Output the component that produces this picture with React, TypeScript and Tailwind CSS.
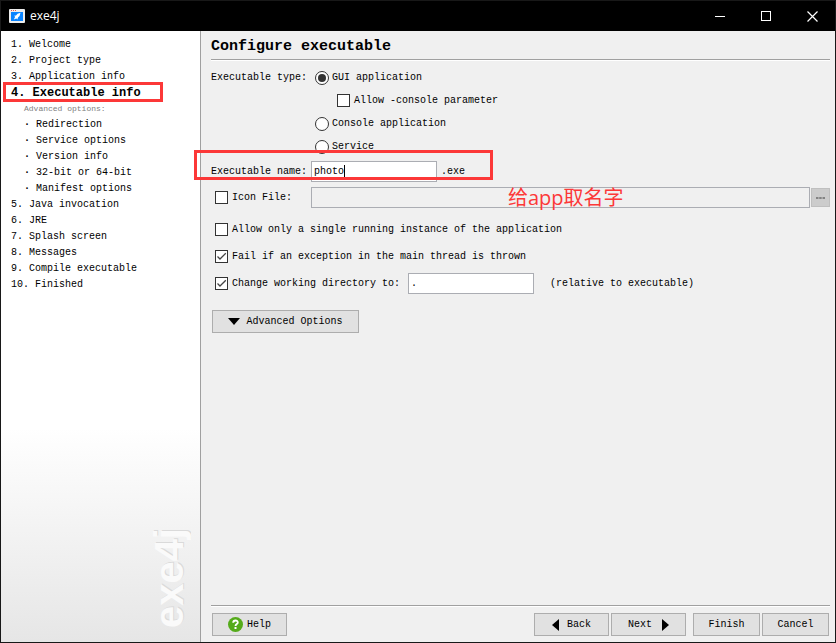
import React, { useState } from "react";

type Step = {
  label: string;
  active?: boolean;
  children?: string[];
};

const steps: Step[] = [
  { label: "Welcome" },
  { label: "Project type" },
  { label: "Application info" },
  {
    label: "Executable info",
    active: true,
    children: ["Redirection", "Service options", "Version info", "32-bit or 64-bit", "Manifest options"],
  },
  { label: "Java invocation" },
  { label: "JRE" },
  { label: "Splash screen" },
  { label: "Messages" },
  { label: "Compile executable" },
  { label: "Finished" },
];

const TitleBar = () => (
  <header className="flex h-[30px] items-center justify-between bg-black pl-2 text-white">
    <div className="flex items-center gap-[5px]">
      <svg width="16" height="14" viewBox="0 0 16 14">
        <rect width="16" height="14" rx="1" fill="#ececec" />
        <rect x="2" y="3" width="12" height="9" fill="#0a84ff" />
        <path d="M2 1.5h1M4 1.5h1M6 1.5h1" stroke="#e0604c" />
        <path d="M11.5 3.8 8.6 4.8 7 6.4l-2 .4 1.2 1L4.8 10.6 7.4 9.4l1 1.2.6-2 1.6-1.6z" fill="#fff" />
      </svg>
      <span className="font-['Open_Sans','Noto_Sans',sans-serif] text-[12px] leading-4">exe4j</span>
    </div>
    <div className="flex h-full">
      <button type="button" aria-label="Minimize" className="grid w-[46px] place-items-center">
        <svg width="11" height="11" viewBox="0 0 11 11" stroke="#fff">
          <path d="M0 5.5h10" />
        </svg>
      </button>
      <button type="button" aria-label="Maximize" className="grid w-[46px] place-items-center">
        <svg width="11" height="11" viewBox="0 0 11 11" stroke="#fff" fill="none">
          <rect x=".5" y=".5" width="9" height="9" />
        </svg>
      </button>
      <button type="button" aria-label="Close" className="grid w-[46px] place-items-center">
        <svg width="11" height="11" viewBox="0 0 11 11" stroke="#fff" strokeWidth="1.2">
          <path d="M.5.5l10 10M10.5.5l-10 10" />
        </svg>
      </button>
    </div>
  </header>
);

const Sidebar = () => (
  <nav className="flex w-[200px] shrink-0 flex-col justify-between border-r border-[#a0a0a0] bg-linear-to-b from-white from-65% to-[#e6e6e6] pt-[6px]">
    <ol>
      {steps.map((step, i) => (
        <li key={step.label}>
          <div className={step.active ? "relative pl-[10px] text-[12px] leading-4 font-bold" : "pl-[10px]"}>
            <a href="#">
              {i + 1}. {step.label}
            </a>
            {step.active && (
              <div className="pointer-events-none absolute -top-[3px] left-[2px] h-5 w-40 border-3 border-[#fc3838]" />
            )}
          </div>
          {step.children && (
            <div className="pl-[23px]">
              <div className="text-[8px] leading-4 text-[#808080]">Advanced options:</div>
              <ul>
                {step.children.map((child) => (
                  <li key={child}>
                    <a href="#">
                      <b>·</b> {child}
                    </a>
                  </li>
                ))}
              </ul>
            </div>
          )}
        </li>
      ))}
    </ol>
    <div
      aria-hidden="true"
      className="mr-2 mb-[14px] rotate-180 self-end font-['Liberation_Sans',sans-serif] text-[40px] leading-[46px] font-bold text-[#fafafa] [text-shadow:1px_1px_0_#dadada] [writing-mode:vertical-rl]"
    >
      exe4j
    </div>
  </nav>
);

const Divider = () => <div className="h-[2px] border-t border-[#a0a0a0] bg-white" />;

const CheckBox = ({ label, defaultChecked }: { label: string; defaultChecked?: boolean }) => (
  <label className="flex items-center gap-1">
    <span className="grid">
      <input
        type="checkbox"
        defaultChecked={defaultChecked}
        className="peer col-start-1 row-start-1 size-[13px] appearance-none border border-[#333] bg-white"
      />
      <svg
        viewBox="0 0 13 13"
        className="pointer-events-none invisible col-start-1 row-start-1 size-[13px] peer-checked:visible"
      >
        <path d="M2.5 6.5 5 9l5.8-5.8" fill="none" stroke="#444" strokeWidth="1.3" />
      </svg>
    </span>
    {label}
  </label>
);

type RadioProps = {
  label: string;
  value: string;
  selected: string;
  onSelect: (value: string) => void;
};

const Radio = ({ label, value, selected, onSelect }: RadioProps) => (
  <label className="flex items-center gap-[3px]">
    <span className="grid">
      <input
        type="radio"
        name="executable-type"
        checked={selected === value}
        onChange={() => onSelect(value)}
        className="peer col-start-1 row-start-1 size-[14px] appearance-none rounded-full border border-[#333] bg-white"
      />
      <span className="pointer-events-none invisible col-start-1 row-start-1 size-2 place-self-center rounded-full bg-[#333] peer-checked:visible" />
    </span>
    {label}
  </label>
);

const Button = ({ className = "", children }: { className?: string; children: React.ReactNode }) => (
  <button
    type="button"
    className={`flex h-[23px] items-center justify-center border border-[#adadad] bg-[#e1e1e1] ${className}`}
  >
    {children}
  </button>
);

const App = () => {
  const [type, setType] = useState("gui");
  const [name, setName] = useState("photo");
  const [directory, setDirectory] = useState(".");

  return (
    <div className="flex min-h-screen flex-col border border-[#181818] bg-[#f0f0f0] font-['Liberation_Mono','Noto_Sans_CJK_SC',monospace] text-[10px] leading-4 text-black">
      <TitleBar />
      <div className="flex flex-1">
        <Sidebar />
        <main className="flex min-w-0 flex-1 flex-col pr-[5px] pb-[6px] pl-[10px]">
          <h1 className="h-7 text-[15px] leading-8 font-bold">Configure executable</h1>
          <Divider />

          <form className="flex-1 pt-[5px]">
            <div role="radiogroup" aria-labelledby="exe-type" className="grid grid-cols-[104px_1fr]">
              <span id="exe-type" className="leading-[23px]">
                Executable type:
              </span>
              <div className="grid auto-rows-[23px] items-center">
                <Radio label="GUI application" value="gui" selected={type} onSelect={setType} />
                <div className="pl-[22px]">
                  <CheckBox label="Allow -console parameter" />
                </div>
                <Radio label="Console application" value="console" selected={type} onSelect={setType} />
                <Radio label="Service" value="service" selected={type} onSelect={setType} />
              </div>
            </div>

            <div className="relative mt-[3px] flex h-[21px] items-center">
              <label htmlFor="exe-name" className="w-[100px]">
                Executable name:
              </label>
              <div className="relative">
                <input
                  id="exe-name"
                  type="text"
                  value={name}
                  onChange={(e) => setName(e.target.value)}
                  className="block h-[21px] w-[126px] border border-[#abadb3] bg-white px-[2px] caret-transparent outline-none"
                />
                <span className="absolute top-1 left-[33px] h-[13px] w-px bg-black" />
              </div>
              <span className="pl-1">.exe</span>
              <div className="pointer-events-none absolute -top-[11px] -left-[17px] z-10 h-[30px] w-[299px] border-3 border-[#fc3838]" />
            </div>

            <div className="relative mt-[5px] flex h-[21px] items-center">
              <div className="w-[100px] pl-1">
                <CheckBox label="Icon File:" />
              </div>
              <input
                type="text"
                aria-label="Icon file path"
                disabled
                className="h-[21px] min-w-0 flex-1 border border-[#abadb3] bg-[#f0f0f0] px-[2px]"
              />
              <button
                type="button"
                disabled
                aria-label="Browse"
                className="ml-px grid h-[19px] w-[19px] place-items-center border border-[#bfbfbf] bg-[#ccc]"
              >
                <svg width="9" height="2" viewBox="0 0 9 2" fill="#838383">
                  <path d="M0 0h2.5v2H0zM3.2 0h2.5v2H3.2zM6.5 0H9v2H6.5z" />
                </svg>
              </button>
              <span className="absolute left-[297px] font-['Open_Sans','Noto_Sans_CJK_SC',sans-serif] text-[20px] leading-6 whitespace-nowrap text-[#fc3838]">
                给app取名字
              </span>
            </div>

            <div className="mt-[11px] grid auto-rows-[21px] gap-y-[6px] pl-1">
              <CheckBox label="Allow only a single running instance of the application" />
              <CheckBox label="Fail if an exception in the main thread is thrown" defaultChecked />
              <div className="flex items-center">
                <CheckBox label="Change working directory to:" defaultChecked />
                <input
                  type="text"
                  aria-label="Working directory"
                  value={directory}
                  onChange={(e) => setDirectory(e.target.value)}
                  className="ml-2 h-[21px] w-[126px] border border-[#abadb3] bg-white px-[2px]"
                />
                <span className="pl-4">(relative to executable)</span>
              </div>
            </div>

            <Button className="mt-4 ml-px w-[147px] gap-[6px]">
              <svg width="12" height="7" viewBox="0 0 12 7">
                <path d="M0 0h12L6 7z" />
              </svg>
              Advanced Options
            </Button>
          </form>

          <Divider />
          <footer className="flex items-center pt-[6px] pr-px pl-px">
            <Button className="w-[75px] gap-1">
              <svg width="15" height="15" viewBox="0 0 15 15">
                <circle cx="7.5" cy="7.5" r="7.5" fill="#55ab1b" />
                <path
                  d="M5.2 5.8C5.2 2.8 9.8 2.8 9.8 5.4 9.8 7.1 7.5 7 7.5 9"
                  fill="none"
                  stroke="#fff"
                  strokeWidth="1.8"
                />
                <rect x="6.5" y="10" width="2" height="2" fill="#fff" />
              </svg>
              Help
            </Button>
            <div className="ml-auto flex gap-[2px]">
              <Button className="w-[75px] gap-2">
                <svg width="7" height="12" viewBox="0 0 7 12">
                  <path d="M7 0v12L0 6z" />
                </svg>
                Back
              </Button>
              <Button className="w-[75px] gap-[10px]">
                Next
                <svg width="7" height="12" viewBox="0 0 7 12">
                  <path d="M0 0v12l7-6z" />
                </svg>
              </Button>
            </div>
            <div className="ml-[7px] flex gap-[2px]">
              <Button className="w-[67px]">Finish</Button>
              <Button className="w-[67px]">Cancel</Button>
            </div>
          </footer>
        </main>
      </div>
    </div>
  );
};

export default App;
